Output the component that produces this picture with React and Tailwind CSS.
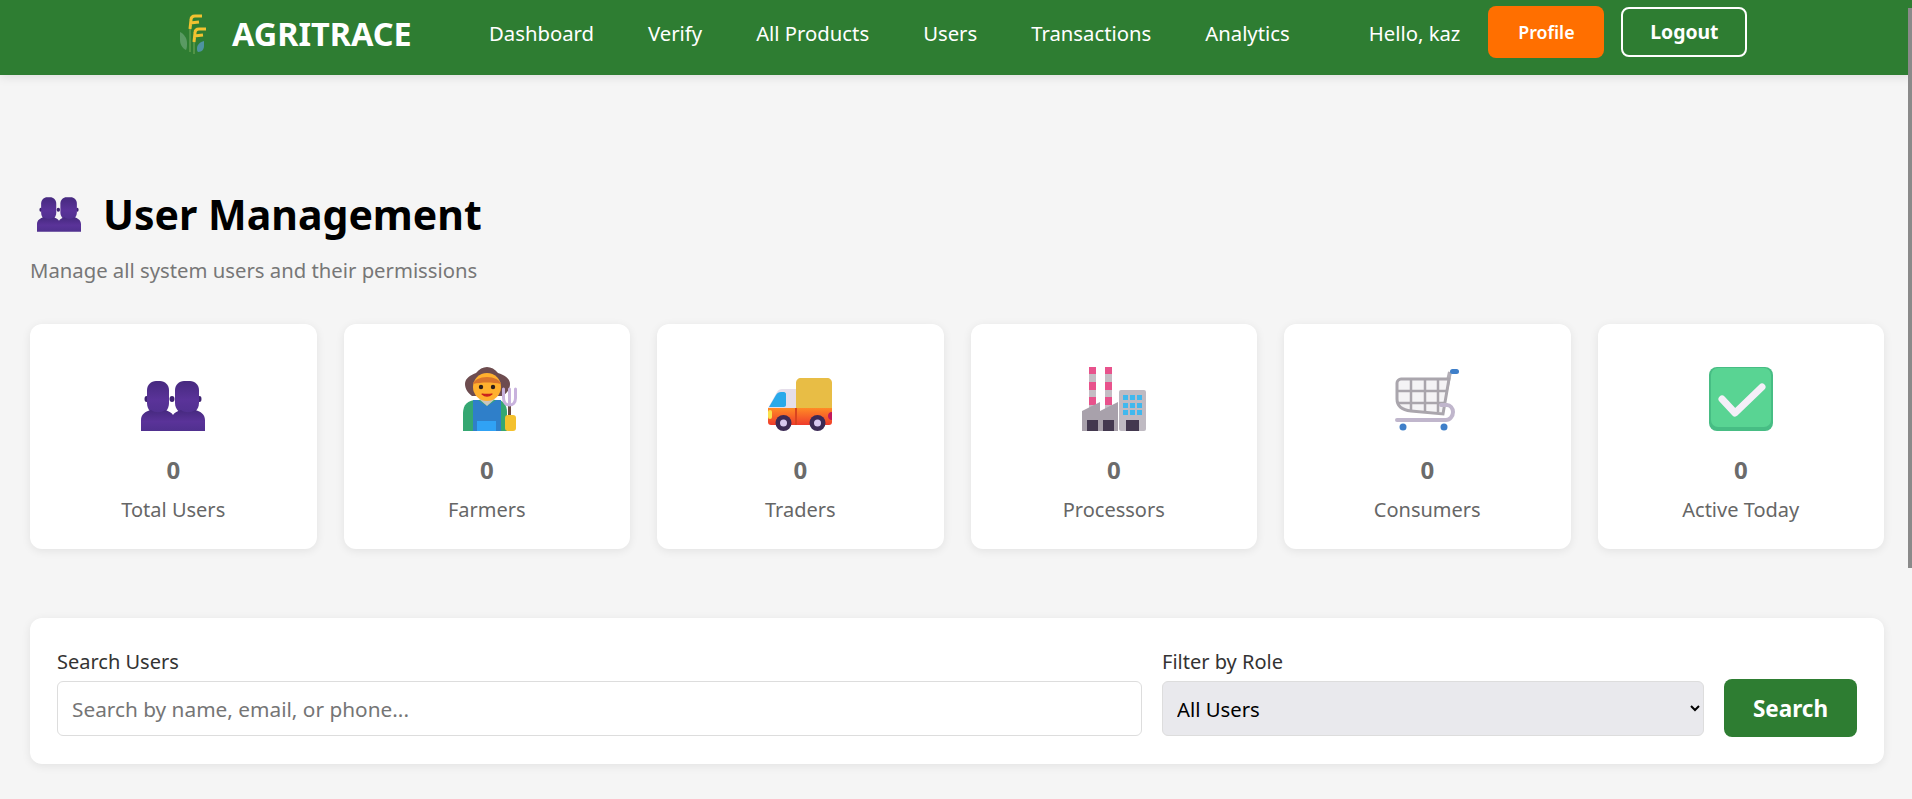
import React from 'react'

const PeopleIcon = ({ className, id }) => (
  <svg viewBox="0 0 64 50" className={className}>
    <defs>
      <linearGradient id={id} x1="0" y1="0" x2="0" y2="1">
        <stop offset="0" stopColor="#46297f" />
        <stop offset="0.55" stopColor="#5a3399" />
        <stop offset="1" stopColor="#50308f" />
      </linearGradient>
    </defs>
    <ellipse cx="5.500" cy="18" rx="2" ry="3" fill="#3d2270" />
    <ellipse cx="58.500" cy="18" rx="2" ry="3" fill="#3d2270" />
    <ellipse cx="31" cy="18" rx="2.500" ry="3" fill="#3d2270" />
    <path d="M6 9c0-5 4-9 9-9h4c5 0 9 4 9 9v13c0 7-5 12-11 12S6 29 6 22z" fill={`url(#${id})`} />
    <path d="M34 9c0-5 4-9 9-9h6c5 0 9 4 9 9v13c0 7-6 12-12 12s-12-5-12-12z" fill={`url(#${id})`} />
    <path d="M0 50V39c0-6 5-9 10-10 4 3 10 3 14 0 4 1 7 3 8 5 1-2 4-4 8-5 4 3 10 3 14 0 5 1 10 4 10 10v11z" fill={`url(#${id})`} />
  </svg>
)

const FarmerIcon = () => (
  <svg viewBox="0 0 64 64" className="w-16 h-16">
    <path d="M8 64V46c0-8 5-13 13-13h22c5 0 9 5 9 12v19z" fill="#35a772" />
    <path d="M18 64V33h5l9 6 9-6h5v31z" fill="#2f7fc9" />
    <path d="M24 32h16l-8 7z" fill="#c9c4c0" />
    <rect x="22" y="54" width="19" height="10" fill="#30a2f5" />
    <path d="M10 17c0-6 6-9 11-11 3-4 7-6 11-6s8 2 11 6c6 2 12 5 12 11 0 5-3 9-7 12H17c-4-3-7-7-7-12z" fill="#6d4c4f" />
    <circle cx="32" cy="20" r="14" fill="#ffb02e" />
    <path d="M18 17c1-4 7-7 14-7s13 3 14 7c-9-2-19-2-28 0z" fill="#d9742c" />
    <circle cx="26" cy="20" r="2.200" fill="#2d1e1b" />
    <circle cx="38" cy="20" r="2.200" fill="#2d1e1b" />
    <path d="M27 27c3 2.500 7 2.500 10 0-3 .5-7 .5-10 0z" fill="#c8201d" stroke="#c8201d" strokeWidth="1.200" strokeLinejoin="round" />
    <rect x="53" y="38" width="3" height="12" fill="#6a4a42" />
    <path d="M48.500 22v9c0 5 3 7 6 7s6-2 6-7v-9M54.500 22v15" fill="none" stroke="#c8b2dd" strokeWidth="3" strokeLinecap="round" />
    <rect x="50" y="48" width="11" height="16" rx="3" fill="#f4c12e" />
  </svg>
)

const TruckIcon = () => (
  <svg viewBox="0 0 64 64" className="w-16 h-16">
    <defs>
      <linearGradient id="truckBase" x1="0" y1="0" x2="0" y2="1">
        <stop offset="0" stopColor="#ff8b25" />
        <stop offset="1" stopColor="#ef3b2c" />
      </linearGradient>
    </defs>
    <path d="M0 41l9-16c1-2 3-3 5-3h14v19z" fill="#e5deea" />
    <path d="M1 40l7-12c1-2 3-3 5-3h3c1 0 2 1 2 2v11c0 1-1 2-2 2z" fill="#29a9ea" />
    <path d="M28 16c0-3 2-5 5-5h26c3 0 5 2 5 5v25H28z" fill="#e8bd45" />
    <path d="M0 41h64v14c0 2-1 3-3 3H3c-2 0-3-1-3-3z" fill="url(#truckBase)" />
    <rect x="0" y="43" width="4" height="9" rx="2" fill="#f9e24c" />
    <path d="M64 45v8c-3 0-4-2-4-4s1-4 4-4z" fill="#c2185b" />
    <rect x="27" y="41" width="2" height="17" fill="#d9431f" />
    <circle cx="15.500" cy="56" r="8" fill="#3c2a55" />
    <circle cx="15.500" cy="56" r="3.500" fill="#d7c7ef" />
    <circle cx="49.500" cy="56" r="8" fill="#3c2a55" />
    <circle cx="49.500" cy="56" r="3.500" fill="#d7c7ef" />
  </svg>
)

const Stack = ({ x }) => (
  <>
    <rect x={x} y="0" width="7" height="42" fill="#c4bdc4" />
    <rect x={x} y="0" width="7" height="7" fill="#e8528c" />
    <rect x={x} y="15" width="7" height="8" fill="#e8528c" />
    <rect x={x} y="30" width="7" height="8" fill="#e8528c" />
  </>
)

const FactoryIcon = () => (
  <svg viewBox="0 0 64 64" className="w-16 h-16">
    <Stack x={7} />
    <Stack x={23} />
    <path d="M0 44l18-9v9l18-9v29H0z" fill="#a8a1ab" />
    <rect x="37" y="23" width="27" height="41" rx="2" fill="#bfbac2" />
    {[28, 36, 43].map((y) =>
      [41, 48, 55].map((x) => <rect key={`${x}-${y}`} x={x} y={y} width="5" height="5" fill="#3fb8ee" />)
    )}
    <rect x="5" y="53" width="11" height="11" fill="#43384f" />
    <rect x="21" y="53" width="11" height="11" fill="#43384f" />
    <rect x="44" y="53" width="13" height="11" fill="#43384f" />
  </svg>
)

const CartIcon = () => (
  <svg viewBox="0 0 64 64" className="w-16 h-16">
    <path d="M55 5L46 46" stroke="#b3aeb6" strokeWidth="4" fill="none" />
    <rect x="55" y="2" width="9" height="5" rx="2.500" fill="#3f7fc9" />
    <path d="M6 12h48l-6 35-32-3C7 43 2 39 2 32V16c0-2 2-4 4-4z" fill="#f4f3f5" stroke="#aaa6ad" strokeWidth="3" />
    <path d="M16 12v31M30 12v33M43 12v33M2 24h50M3 36h46" stroke="#a9a5ac" strokeWidth="2.500" fill="none" />
    <path d="M46 38h6c3 0 6 3 6 7s-3 8-7 8H2" stroke="#c0b6cc" strokeWidth="4" fill="none" strokeLinecap="round" />
    <circle cx="8" cy="60" r="3.500" fill="#3f7fc9" />
    <circle cx="49" cy="60" r="3.500" fill="#3f7fc9" />
  </svg>
)

const CheckIcon = () => (
  <svg viewBox="0 0 64 64" className="w-16 h-16">
    <rect x="0" y="0" width="64" height="64" rx="8" fill="#47bd84" />
    <rect x="2" y="1" width="60" height="59" rx="7" fill="#59d493" />
    <path d="M13 32l13 14 27-26" fill="none" stroke="#f4eff8" strokeWidth="7" strokeLinecap="round" strokeLinejoin="round" />
  </svg>
)

const LogoIcon = () => (
  <svg viewBox="0 0 27 40" className="w-[27px] h-[40px]">
    <path d="M0 18c4 2 7 6 7 11 0 3 0 5-1 7-4-2-6-6-6-10z" fill="#5a9a63" />
    <path d="M24 27c-4 1-7 4-7 7 0 2 0 3 1 4 4 0 6-3 6-6z" fill="#4e93a0" />
    <path d="M10 14v24M14 26v14" stroke="#5f9c4e" strokeWidth="1.500" />
    <path d="M10 15l1-9c0-3 2-4 4-4h7M10 9l9-1" fill="none" stroke="#f2c230" strokeWidth="3" />
    <path d="M14 28l1-9c0-3 2-4 4-4h7M14 22l9-1" fill="none" stroke="#f2c230" strokeWidth="3" />
  </svg>
)

const navLinks = ['Dashboard', 'Verify', 'All Products', 'Users', 'Transactions', 'Analytics']

const stats = [
  { label: 'Total Users', icon: <PeopleIcon id="peopleCard" className="w-16 h-[50px] mt-[14px]" /> },
  { label: 'Farmers', icon: <FarmerIcon /> },
  { label: 'Traders', icon: <TruckIcon /> },
  { label: 'Processors', icon: <FactoryIcon /> },
  { label: 'Consumers', icon: <CartIcon /> },
  { label: 'Active Today', icon: <CheckIcon /> },
]

const App = () => {
  return (
    <div className="relative h-[799px] overflow-hidden bg-[#f5f5f5] font-['Noto_Sans',sans-serif]">
      <nav className="h-[75px] bg-[#2e7d32] shadow-[0_2px_10px_rgba(0,0,0,0.1)] flex items-center pl-[180px] pb-[8px]">
        <LogoIcon />
        <span className="ml-[25px] w-[257px] text-[32.4px] font-bold text-white">AGRITRACE</span>
        <ul className="flex gap-[54px] text-[20.3px] text-white">
          {navLinks.map((link) => (
            <li key={link}>{link}</li>
          ))}
        </ul>
        <span className="ml-[79px] text-[20.3px] text-white">Hello, kaz</span>
        <button className="ml-[28px] mb-[3px] w-[116px] h-[52px] rounded-lg bg-[#ff6f00] text-white text-[17.8px] font-semibold">
          Profile
        </button>
        <button className="ml-[17px] mb-[3px] w-[126px] h-[50px] rounded-lg border-2 border-white text-white text-[19.4px] font-bold">
          Logout
        </button>
      </nav>

      <main className="pl-[30px] pr-[28px]">
        <div className="mt-[109px] flex items-center">
          <PeopleIcon id="peopleTitle" className="ml-[7px] w-[44px] h-[35px]" />
          <h1 className="ml-[22px] text-[41px] font-bold text-black leading-[60px]">User Management</h1>
        </div>
        <p className="mt-[11px] text-[20.3px] text-[#777]">Manage all system users and their permissions</p>

        <div className="mt-[39px] grid grid-cols-6 gap-[27px]">
          {stats.map((stat) => (
            <div
              key={stat.label}
              className="h-[225px] rounded-xl bg-white shadow-[0_2px_10px_rgba(0,0,0,0.08)] flex flex-col items-center pt-[43px]"
            >
              {stat.icon}
              <div className="mt-[23px] text-[24px] leading-[32px] font-bold text-[#6b6b6b]">0</div>
              <div className="mt-[9px] text-[20px] leading-[30px] text-[#666]">{stat.label}</div>
            </div>
          ))}
        </div>

        <div className="mt-[69px] rounded-xl bg-white shadow-[0_2px_10px_rgba(0,0,0,0.08)] px-[27px] pt-[30px] pb-[27px] flex items-end gap-[20px]">
          <div className="flex-1 mb-px">
            <label className="block text-[20px] leading-[28px] text-[#333]">Search Users</label>
            <input
              placeholder="Search by name, email, or phone..."
              className="mt-[5px] w-full h-[55px] rounded-md border border-[#ddd] bg-white px-[14px] text-[20.8px] placeholder:text-[#757575]"
            />
          </div>
          <div className="w-[542px] mb-px">
            <label className="block text-[20px] leading-[28px] text-[#333]">Filter by Role</label>
            <select className="mt-[5px] w-full h-[55px] rounded-md border border-[#ddd] bg-[#e9e9ed] px-[10px] text-[20.3px] text-black">
              <option>All Users</option>
            </select>
          </div>
          <button className="w-[133px] h-[58px] rounded-lg bg-[#2e7d32] text-white text-[22.5px] font-bold">
            Search
          </button>
        </div>
      </main>

      <div className="absolute right-0 top-[8px] w-[4px] h-[560px] bg-[#8a8a8a]" />
    </div>
  )
}

export default App
